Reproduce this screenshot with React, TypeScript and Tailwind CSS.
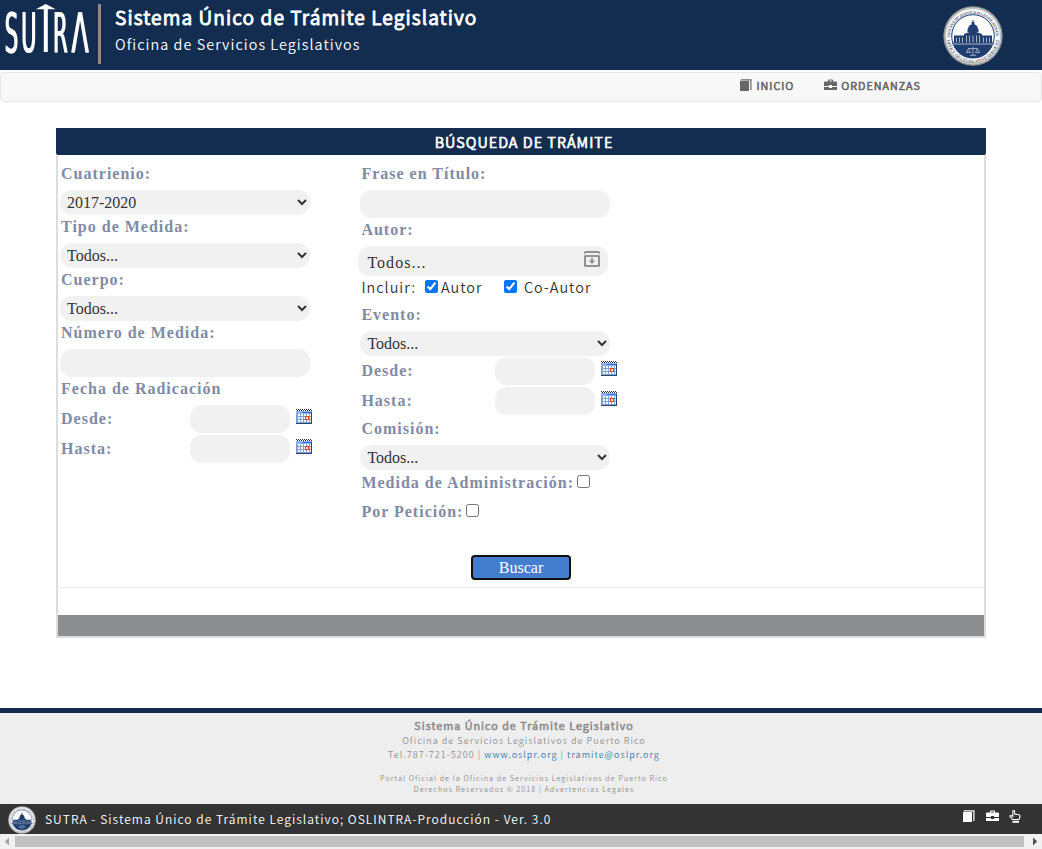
import React from "react";

const sans = "font-['Noto_Sans_CJK_JP','Noto_Sans',sans-serif]";
const serif = "font-['Liberation_Serif',serif]";

function Logo() {
  return (
    <svg width="92" height="70" viewBox="0 0 92 70" className="block shrink-0" fill="#fff" aria-label="SUTRA">
      <g className="font-['DejaVu_Sans',sans-serif] font-normal tracking-normal [filter:drop-shadow(1.6px_0_0_#fff)]" fontSize="56">
        <text transform="translate(4.2 52) scale(.38 1)">S</text>
        <text transform="translate(20.7 52) scale(.37 1)">U</text>
        <text transform="translate(52.6 52) scale(.38 1)">R</text>
        <text transform="translate(71 52) scale(.45 1)">Λ</text>
      </g>
      <path d="M35.800 9.300 45.700 4l10 5.300h-7.900V52h-4V9.300z" />
    </svg>
  );
}

function Seal({ size }: { size: number }) {
  return (
    <svg width={size} height={size} viewBox="0 0 60 60" className="block shrink-0">
      <defs>
        <path id="sealTop" d="M7 31a23 23 0 0 1 46 0" />
        <path id="sealBottom" d="M4 31a26 26 0 0 0 52 0" />
      </defs>
      <circle cx="30" cy="30" r="29.700" fill="#8f9293" />
      <circle cx="30" cy="30" r="28.400" fill="#dcdddd" />
      <circle cx="30" cy="30" r="27.400" fill="#fff" stroke="#a5a7a8" strokeWidth=".8" />
      <g fontSize="4.300" fontWeight="700" fill="#56617a" className="font-['Liberation_Serif',serif] tracking-normal">
        <text><textPath href="#sealTop" textLength="71">OFICINA DE SERVICIOS LEGISLATIVOS</textPath></text>
        <text><textPath href="#sealBottom" startOffset="3" textLength="75">OFFICE OF LEGISLATIVE SERVICES</textPath></text>
      </g>
      <circle cx="30" cy="30" r="21.300" fill="#fff" stroke="#213e70" strokeWidth="1" />
      <path d="M9.500 37h41a21.300 21.300 0 0 1-41 0z" fill="#213e70" />
      <g fill="#213e70">
        <path d="M29.500 14h1v3h-1zM28.600 16h2.800v3h-2.800zM25 23.500a5 5.500 0 0 1 10 0z" />
        <path d="M24.500 23h11v3h-11zM21 28l9-3.200L39 28z" />
        <path d="M21 28h18v2H21zM11 29.500h38v8H11zM9.500 36.500h41v2h-41z" />
      </g>
      <path d="M13.500 31.500v5M16.500 31.500v5M19.500 31.500v5M23.500 29.500v7M26.500 29.500v7M30 29.500v7M33.500 29.500v7M36.500 29.500v7M40.500 31.500v5M43.500 31.500v5M46.500 31.500v5" stroke="#b9c1d0" strokeWidth=".9" />
      <path d="M10 38h40" stroke="#e9edf3" strokeWidth=".7" />
      <path d="M30 41v8M25.500 42.500h9M27 49.300h6M25.500 42.500l-2 4h4zM34.500 42.500l-2 4h4z" stroke="#b9c3d7" strokeWidth=".8" fill="none" />
    </svg>
  );
}

function BookIcon() {
  return (
    <svg width="12" height="12" viewBox="0 0 12 12" className="block" fill="currentColor">
      <path d="M0 2h9v10H0zM1 .3h10.500V11h-1.200V1.500H.5z" />
    </svg>
  );
}

function BriefcaseIcon() {
  return (
    <svg width="13" height="12" viewBox="0 0 13 12" className="block" fill="currentColor">
      <path d="M4 2.500V1.300Q4 .5 4.800.5h3.400q.8 0 .8.8v1.200h3q1 0 1 1V7H8V6H5v1H0V3.500q0-1 1-1zM5.200 2.500h2.600v-.9H5.200zM0 8h5v1h3V8h5v3H0z" />
    </svg>
  );
}

function HandIcon() {
  return (
    <svg width="12" height="13" viewBox="0 0 12 13" className="block" fill="none" stroke="currentColor" strokeWidth="1.100">
      <path d="M3.500 9.500 1 6.500q-.4-1 .8-1l2 1V1.500q0-1 .9-1t.9 1V4l4.200.8q1.400.3 1.200 1.500L10 9.500z" />
      <path d="M3.500 11.800h6.500" strokeWidth="2" />
    </svg>
  );
}

function CalendarIcon() {
  return (
    <svg width="16" height="15" viewBox="0 0 16 15" className="block" shapeRendering="crispEdges">
      <path d="M0 2h16v13H0z" fill="#7d9fd2" />
      <path d="M0 2h16v3H0z" fill="#8db4f2" />
      <path d="M6 3h9v1H6z" fill="#3a6cdb" />
      <path d="M0 .5h16M1 1.500h15" stroke="#333" strokeDasharray="1 1" />
      <g fill="#fff">
        <path d="M2 5h2v2H2zM5 5h2v2H5zM8 5h2v2H8zM11 5h2v2h-2zM2 8h2v2H2zM5 8h2v2H5zM8 8h2v2H8zM11 8h2v2h-2zM2 11h2v2H2zM5 11h2v2H5zM8 11h2v2H8zM11 11h2v2h-2zM14 5h1v2h-1zM14 8h1v2h-1zM14 11h1v2h-1z" />
      </g>
      <path d="M0 14h16v1H0zM15 3h1v12h-1z" fill="#28496f" />
      <path d="M9.500 7.500h3v3h-3z" fill="#fff" stroke="#ee3b12" />
    </svg>
  );
}

function ArchiveIcon() {
  return (
    <svg width="16" height="16" viewBox="0 0 16 16" className="block" fill="#929292">
      <path d="M1 0h14l1 1v2h-1V2H1v1H0V1zM1 4h14l1 1v10l-1 1H1l-1-1V5zM2 6v8h12V6z" fillRule="evenodd" />
      <path d="M7 7h2v2.500h2.500L8 13 4.500 9.500H7z" />
    </svg>
  );
}

function Label({ children, className = "h-7" }: { children: React.ReactNode; className?: string }) {
  return <div className={`${className} pl-px leading-[23px] font-bold tracking-[1px] text-[#7f8ba6]`}>{children}</div>;
}

function Picker({ value }: { value: string }) {
  return (
    <select className="block h-[25px] w-[250px] rounded-[12px] bg-[#f1f1f1] pl-[3px] text-base tracking-normal text-[#333]" defaultValue={value}>
      <option>{value}</option>
    </select>
  );
}

function Field({ className = "w-[250px]" }: { className?: string }) {
  return <input type="text" className={`${className} block h-7 shrink-0 rounded-[12px] bg-[#f1f1f1] px-2 text-[#333]`} />;
}

function DateRow({ label, wide = false }: { label: string; wide?: boolean }) {
  return (
    <div className="mb-0.5 flex h-7">
      <Label className={wide ? "w-[134.600px] pt-[2px]" : "w-[130px] pt-[2px]"}>{label}</Label>
      <Field className="w-[100px]" />
      <span className="ml-1.5 pt-1"><CalendarIcon /></span>
    </div>
  );
}

export default function App() {
  return (
    <div className={`${sans} flex h-[849px] w-[1042px] flex-col overflow-hidden bg-white font-[350] tracking-[1.030px] text-[#333]`}>
      <header className="flex h-[70px] shrink-0 bg-[#122d50] text-white">
        <Logo />
        <div className="mt-1 ml-1.5 h-[60px] w-[3px] bg-[#8c8c8c]" />
        <div className="ml-[14px] flex-1 whitespace-nowrap">
          <h1 className="h-[34px] text-[19.200px] leading-[34px] font-[350] tracking-[1.070px] [-webkit-text-stroke:0.9px_currentColor]">Sistema Único de Trámite Legislativo</h1>
          <p className="text-[14.400px] leading-[20px] tracking-[1.050px]">Oficina de Servicios Legislativos</p>
        </div>
        <div className="mt-1.5 mr-[39px]"><Seal size={60} /></div>
      </header>

      <nav className="mt-0.5 flex h-[30px] shrink-0 justify-end gap-[30px] rounded border border-[#e7e7e7] bg-[#f8f8f8] pr-[120px] text-[10.800px] leading-[25px] tracking-[1px] text-[#666] [-webkit-text-stroke:0.6px_currentColor]">
        <a className="flex"><span className="mt-1.5 mr-1"><BookIcon /></span>INICIO</a>
        <a className="flex"><span className="mt-1.5 mr-1"><BriefcaseIcon /></span>ORDENANZAS</a>
      </nav>

      <main className="mx-14 mt-[26px] h-[510px] shrink-0">
        <h2 className="h-[27px] rounded-b-[2px] bg-[#122d50] pl-[6px] text-center text-[14.400px] leading-[28px] font-[350] text-white [-webkit-text-stroke:0.7px_currentColor]">BÚSQUEDA DE TRÁMITE</h2>
        <div className="flex h-[483px] flex-col border-x-2 border-b-2 border-[#ddd]">
          <div className={`${serif} flex h-[400px] pt-[7px] pl-[2px] text-base`}>
            <section className="w-[300px]">
              <Label>Cuatrienio:</Label>
              <Picker value="2017-2020" />
              <Label>Tipo de Medida:</Label>
              <Picker value="Todos..." />
              <Label>Cuerpo:</Label>
              <Picker value="Todos..." />
              <Label>Número de Medida:</Label>
              <Field />
              <Label>Fecha de Radicación</Label>
              <DateRow label="Desde:" />
              <DateRow label="Hasta:" />
            </section>
            <section className="ml-[0.400px] w-[300px]">
              <Label>Frase en Título:</Label>
              <Field />
              <Label>Autor:</Label>
              <div className="-ml-0.5 flex h-[30px] w-[250px] justify-between rounded-[12px] bg-[#f1f1f1] pt-[5px] pr-2 pl-[9px] leading-[24px]">
                Todos...
                <ArchiveIcon />
              </div>
              <div className={`${sans} flex h-[27px] pl-px text-[14.400px] leading-[22px]`}>
                <span className="w-[64px]">Incluir:</span>
                <input type="checkbox" defaultChecked className="mt-1 size-[13px]" />
                <span className="ml-[2.500px] w-[63.500px]">Autor</span>
                <input type="checkbox" defaultChecked className="mt-1 size-[13px]" />
                <span className="ml-[6.500px]">Co-Autor</span>
              </div>
              <Label>Evento:</Label>
              <Picker value="Todos..." />
              <div className="pt-px">
                <DateRow label="Desde:" wide />
                <DateRow label="Hasta:" wide />
              </div>
              <Label>Comisión:</Label>
              <Picker value="Todos..." />
              <div className="flex h-[29px] pt-px">
                <Label>Medida de Administración:</Label>
                <input type="checkbox" className="mt-1 ml-[3px] size-[13px]" />
              </div>
              <div className="flex h-[29px] pt-px">
                <Label>Por Petición:</Label>
                <input type="checkbox" className="mt-1 ml-[3px] size-[13px]" />
              </div>
            </section>
          </div>
          <button className={`${serif} h-[25px] w-[100px] self-center rounded-[4px] border-2 border-[#101010] bg-[#447dcd] text-base leading-[21px] tracking-normal text-white`}>Buscar</button>
          <div className="mt-[7px] h-[28px] border-t border-[#eee]" />
          <div className="h-[21px] bg-[#8c8d8f]" />
        </div>
      </main>

      <footer className="mt-[70px] h-24 shrink-0 border-t-[5px] border-[#122d50] bg-[#eee] pt-[5px] pl-[6px] text-center text-[9px] text-[#8f8f8f]">
        <p className="text-[10.800px] leading-[15px] text-[#8c8c8c] [-webkit-text-stroke:0.6px_currentColor]">Sistema Único de Trámite Legislativo</p>
        <p className="mt-px leading-[14px]">Oficina de Servicios Legislativos de Puerto Rico</p>
        <p className="leading-[14px]">Tel.787-721-5200 | <a className="text-[#337ab7]">www.oslpr.org</a> | <a className="text-[#337ab7]">tramite@oslpr.org</a></p>
        <p className="mt-[11px] text-[7.200px] leading-[11px]">Portal Oficial de la Oficina de Servicios Legislativos de Puerto Rico<br />Derechos Reservados © 2018 | Advertencias Legales</p>
      </footer>

      <div className="flex h-[30px] shrink-0 bg-[#333] pt-0.5 pr-[21px] pl-2 text-white">
        <Seal size={28} />
        <span className="ml-[9px] flex-1 text-[12px] leading-[26px]">SUTRA - Sistema Único de Trámite Legislativo; OSLINTRA-Producción - Ver. 3.0</span>
        <div className="mt-1 flex gap-[10.500px]">
          <BookIcon />
          <BriefcaseIcon />
          <HandIcon />
        </div>
      </div>
      <div className="flex h-[15px] shrink-0 items-center bg-[#f1f1f1]">
        <svg width="15" height="15" viewBox="0 0 15 15" fill="#a3a3a3"><path d="M9 3.500v8L4.800 7.500z" /></svg>
        <div className="h-[11px] w-[1009px] bg-[#c1c1c1]" />
        <svg width="15" height="15" viewBox="0 0 15 15" fill="#505050" className="ml-[3px]"><path d="M6 3.500v8l4.200-4z" /></svg>
      </div>
    </div>
  );
}
